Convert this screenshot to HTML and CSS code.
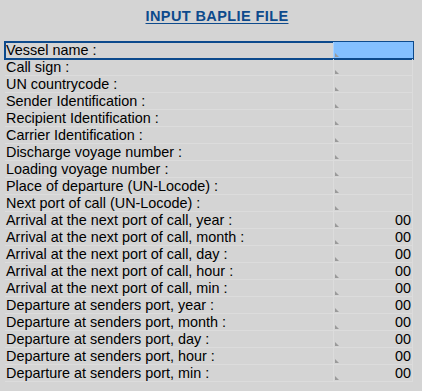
FILE: index.html
```html
<!DOCTYPE html>
<html lang="en">
<head>
    <meta charset="UTF-8">
    <title>Input BAPLIE file</title>
    <link rel="stylesheet" href="styles.css">
</head>
<body>
    <h1 class="title"><span>INPUT BAPLIE FILE</span></h1>
    <div class="grid">
        <div class="row selected"><div class="label">Vessel name :</div><div class="value"></div></div>
        <div class="row"><div class="label">Call sign :</div><div class="value"></div></div>
        <div class="row"><div class="label">UN countrycode :</div><div class="value"></div></div>
        <div class="row"><div class="label">Sender Identification :</div><div class="value"></div></div>
        <div class="row"><div class="label">Recipient Identification :</div><div class="value"></div></div>
        <div class="row"><div class="label">Carrier Identification :</div><div class="value"></div></div>
        <div class="row"><div class="label">Discharge voyage number :</div><div class="value"></div></div>
        <div class="row"><div class="label">Loading voyage number :</div><div class="value"></div></div>
        <div class="row"><div class="label">Place of departure (UN-Locode) :</div><div class="value"></div></div>
        <div class="row"><div class="label">Next port of call (UN-Locode) :</div><div class="value"></div></div>
        <div class="row"><div class="label">Arrival at the next port of call, year :</div><div class="value">00</div></div>
        <div class="row"><div class="label">Arrival at the next port of call, month :</div><div class="value">00</div></div>
        <div class="row"><div class="label">Arrival at the next port of call, day :</div><div class="value">00</div></div>
        <div class="row"><div class="label">Arrival at the next port of call, hour :</div><div class="value">00</div></div>
        <div class="row"><div class="label">Arrival at the next port of call, min :</div><div class="value">00</div></div>
        <div class="row"><div class="label">Departure at senders port, year :</div><div class="value">00</div></div>
        <div class="row"><div class="label">Departure at senders port, month :</div><div class="value">00</div></div>
        <div class="row"><div class="label">Departure at senders port, day :</div><div class="value">00</div></div>
        <div class="row"><div class="label">Departure at senders port, hour :</div><div class="value">00</div></div>
        <div class="row"><div class="label">Departure at senders port, min :</div><div class="value">00</div></div>
    </div>
</body>
</html>
```

FILE: styles.css
```css
*{
    margin: 0;
    padding: 0;
    box-sizing: border-box;
}
body{
    width: 422px;
    height: 391px;
    background: #d4d4d4;
    font-family: "Liberation Sans", Arial, sans-serif;
    color: #000000;
    overflow: hidden;
}
.title{
    height: 42px;
    padding: 8px 0 0 12px;
    text-align: center;
    font-size: 14.5px;
    font-weight: bold;
    color: #0d4a8c;
    letter-spacing: 0.4px;
}
.title > span{
    text-decoration: underline;
    text-underline-offset: 2px;
}
.grid{
    width: 408px;
    margin-left: 5px;
}
.row{
    display: flex;
    height: 17px;
    border-bottom: 1px solid #dcdcdc;
    font-size: 14.4px;
    line-height: 17px;
}
.label{
    width: 328px;
    padding-left: 1px;
    white-space: nowrap;
    overflow: hidden;
}
.value{
    position: relative;
    flex: 1;
    border-left: 1px solid #dcdcdc;
    border-right: 1px solid #dcdcdc;
    padding-right: 1px;
    text-align: right;
}
/* small grey corner marker of each cell */
.value::before{
    content: "";
    position: absolute;
    left: 1px;
    bottom: 1px;
    width: 0;
    height: 0;
    border-left: 4px solid #9a9a9a;
    border-top: 4px solid transparent;
}
.selected{
    outline: 2px solid #0d4a8c;
    outline-offset: -1px;
}
.selected > .value{
    background: #84c0ff;
    border-left: 1px solid #a8d2ff;
    border-right: none;
}
```
